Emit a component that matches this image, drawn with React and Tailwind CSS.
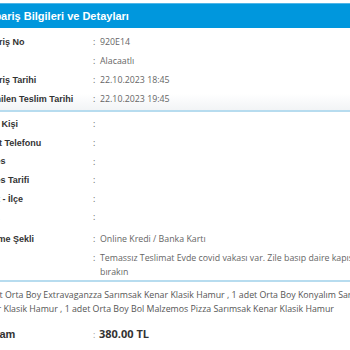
const info = [
  { label: 'Sipariş No', value: '920E14' },
  { label: 'Bayi', value: 'Alacaatlı' },
  { label: 'Sipariş Tarihi', value: '22.10.2023 18:45' },
  { label: 'İstenilen Teslim Tarihi', value: '22.10.2023 19:45' },
];

const customer = [
  { label: 'Alıcı Kişi', value: '' },
  { label: 'Sabit Telefonu', value: '' },
  { label: 'Adres', value: '' },
  { label: 'Adres Tarifi', value: '' },
  { label: 'Kent - İlçe', value: '' },
  { label: 'Bina', value: '' },
];

const Row = ({ label, value, h = 'h-[19px]' }) => (
  <div className={`flex items-center ${h}`}>
    <div className="w-[113px] shrink-0 font-['Liberation_Sans',Arial,sans-serif] text-[9px] font-bold text-[#333]">
      {label}
    </div>
    <div className="flex text-[8.8px] text-[#666]">
      <span className="w-[7px] shrink-0">:</span>
      <span>{value}</span>
    </div>
  </div>
);

export default function App() {
  return (
    <div className="w-[350px] h-[350px] overflow-hidden bg-white font-['Open_Sans',sans-serif]">
      <div className="ml-[-20px] w-[420px] pt-[3px]">
        {/* header */}
        <div className="flex h-[25px] items-center border-t border-[#4fb6e8] bg-[#0097dd] pl-[4px] font-['Liberation_Sans',Arial,sans-serif] text-[11px] font-bold text-white">
          Sipariş Bilgileri ve Detayları
        </div>

        {/* order */}
        <div className="bg-linear-to-b from-white from-80% to-[#f2f4f6] pt-[5px] pb-[1px]">
          {info.map((r) => (
            <Row key={r.label} {...r} />
          ))}
        </div>
        <div className="h-[2px] bg-[#b7dcef]" />

        {/* customer */}
        <div className="pt-[3.7px]">
          {customer.map((r) => (
            <Row key={r.label} {...r} h="h-[18.6px]" />
          ))}
          <div className="mt-[3px]">
            <Row label="Ödeme Şekli" value="Online Kredi / Banka Kartı" />
          </div>
          <div className="flex pt-[1.5px] pb-[1.5px] leading-[14px]">
            <div className="w-[113px] shrink-0 font-['Liberation_Sans',Arial,sans-serif] text-[9px] font-bold text-[#333]">
              Not
            </div>
            <span className="w-[7px] shrink-0 text-[8.8px] text-[#666]">:</span>
            <div className="whitespace-nowrap text-[8.8px] text-[#666]">
              Temassız Teslimat Evde covid vakası var. Zile basıp daire kapısının önüne
              <br />
              bırakın
            </div>
          </div>
        </div>
        <div className="h-[2px] bg-[#b7dcef]" />

        {/* products */}
        <div className="ml-[-3px] whitespace-nowrap pt-[6px] text-[8.8px] leading-[14px] text-[#555]">
          1 adet Orta Boy Extravaganzza Sarımsak Kenar Klasik Hamur , 1 adet Orta Boy Konyalım Sarımsak
          <br />
          Kenar Klasik Hamur , 1 adet Orta Boy Bol Malzemos Pizza Sarımsak Kenar Klasik Hamur
        </div>

        {/* total */}
        <div className="mt-[8px] flex h-[20px] items-center">
          <div className="ml-[-3px] w-[116px] shrink-0 font-['Liberation_Sans',Arial,sans-serif] text-[11px] font-bold text-[#333]">
            Toplam
          </div>
          <span className="w-[6px] shrink-0 text-[9px] text-[#999]">:</span>
          <span className="text-[11px] font-bold text-[#333]">380.00 TL</span>
        </div>
      </div>
    </div>
  );
}
